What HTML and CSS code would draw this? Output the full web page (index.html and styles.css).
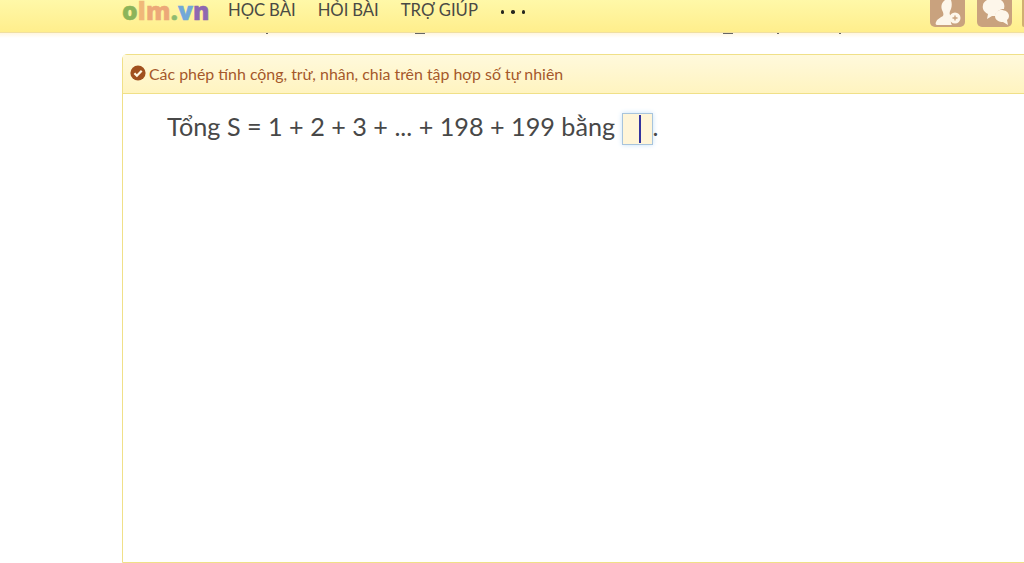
FILE: index.html
```html
<!DOCTYPE html>
<html lang="vi">
<head>
<meta charset="utf-8">
<title>olm.vn</title>
<link rel="stylesheet" href="styles.css">
</head>
<body>
<header class="topbar">
  <div class="logo"><span class="c-o">o</span><span class="c-l">l</span><span class="c-m">m</span><span class="c-d">.</span><span class="c-v">v</span><span class="c-n">n</span></div>
  <nav class="nav">
    <a>HỌC BÀI</a>
    <a>HỎI BÀI</a>
    <a>TRỢ GIÚP</a>
    <a class="more"><i class="dot"></i><i class="dot"></i><i class="dot"></i></a>
  </nav>
  <div class="actions">
    <span class="action first">
      <svg viewBox="0 0 35 27" width="35" height="27"><path fill="#fdf6ea" d="M15 0h6c1 3 1 6 0 9-1 2-2 4-1 6 1 1 2 2 3 2-2 2-3 5-1 8H7c-1 0-2-1-1-3 1-3 4-4 7-6 1-2 0-4-1-6-1-3-1-7 3-10z"/><circle cx="25" cy="18" r="5.5" fill="#fdf6ea"/><path stroke="#c9a27e" stroke-width="1.4" d="M22.5 18h5M25 15.500v5"/></svg>
    </span>
    <span class="action">
      <svg viewBox="0 0 35 27" width="35" height="27"><path fill="#fdf6ea" d="M10 0h14c3 2 4 5 3 9-4 0-8 2-9 7h-3l-5 3 1-5c-4-2-6-5-5-9 0-2 2-4 4-5z"/><path fill="#fdf6ea" d="M24 10c4 0 8 2 8 6 0 2-1 3-2 4l1 5-5-3c-4 0-8-2-8-6s3-6 6-6z"/></svg>
    </span>
    <span class="action cut"></span>
  </div>
</header>
<div class="strip" aria-hidden="true">
  <i class="frag f1"></i><i class="frag f2"></i><i class="frag f3"></i><i class="frag f4"></i><i class="frag f5"></i>
</div>
<main class="card">
  <div class="card-head">
    <svg class="check" viewBox="0 0 16 16" width="16" height="16"><circle cx="8" cy="8" r="7.6" fill="#a0501e"/><path d="M4.400 8.200l2.500 2.500 4.800-5" fill="none" stroke="#fff8e4" stroke-width="2.200"/></svg>
    <span>Các phép tính cộng, trừ, nhân, chia trên tập hợp số tự nhiên</span>
  </div>
  <div class="card-body">
    <p class="question">Tổng S = 1 + 2 + 3 + ... + 198 + 199 bằng <span class="blank"><span class="caret"></span></span>.</p>
  </div>
</main>
</body>
</html>
```
FILE: styles.css
```css
* { box-sizing: border-box; }
html, body { margin: 0; height: 100%; overflow: hidden; background: #fff; }
body { font-family: "Lato", "Noto Sans", sans-serif; color: #444; display: flex; flex-direction: column; }
.topbar { height: 33px; flex: none; display: flex; align-items: flex-start; padding-left: 122px; background: linear-gradient(#fff8a8, #ffee8c); border-bottom: 1px solid #f0dfa0; }
.logo { width: 106px; font-family: "Open Sans", sans-serif; font-weight: 800; font-size: 24.5px; line-height: 21px; letter-spacing: 0.2px; -webkit-text-stroke: 0.5px currentColor; }
.c-o { color: #8cb45a; } .c-l { color: #f0b878; } .c-m { color: #eca878; } .c-d { color: #8fbb70; } .c-v { color: #72a8d8; } .c-n { color: #8f68b0; }
.nav { display: flex; gap: 22px; font-size: 16.7px; line-height: 21px; color: #4a4a44; word-spacing: -0.5px; }
.more { display: flex; gap: 7px; align-items: center; margin-left: 1px; padding-top: 3px; }
.dot { width: 3.500px; height: 3.500px; border-radius: 50%; background: #26261f; }
.actions { margin-left: auto; display: flex; gap: 10px; }
.action { width: 35px; height: 27px; background: #c9a27e; border-radius: 0 0 5px 5px; overflow: hidden; }
.action svg { display: block; }
.first { margin-right: 2px; }
.cut { width: 2px; border-radius: 0 0 0 2px; background: #d0b070; }
.strip { height: 21px; flex: none; position: relative; background: linear-gradient(#fff6e0, #fff 5px); }
.frag { position: absolute; top: 0; height: 1px; width: 2px; background: #666; }
.f1 { left: 266px; }
.f2 { left: 415px; width: 10px; }
.f3 { left: 723px; width: 10px; }
.f4 { left: 777px; }
.f5 { left: 839px; }
.card { flex: 1; margin-left: 122px; margin-right: -10px; border: 1px solid #f0e088; border-radius: 5px 0 0 0; }
.card-head { height: 39px; display: flex; align-items: center; gap: 3px; padding: 0 0 2px 7px; background: linear-gradient(#fff9dc, #fff4c0); border-bottom: 1px solid #f0e088; color: #a5582a; font-size: 15.9px; }
.check { flex: none; }
.card-body { padding: 16px 0 0 44px; }
.question { margin: 0; font-size: 25.2px; line-height: 32px; color: #484848; }
.blank { display: inline-flex; justify-content: center; vertical-align: -7px; width: 31px; height: 32px; background: #fff5d8; border: 1px solid #a8c4dc; box-shadow: 0 0 5px #c8e2f8; }
.caret { width: 2px; background: #3434a0; margin: 1px 0 1px 6px; }
```
